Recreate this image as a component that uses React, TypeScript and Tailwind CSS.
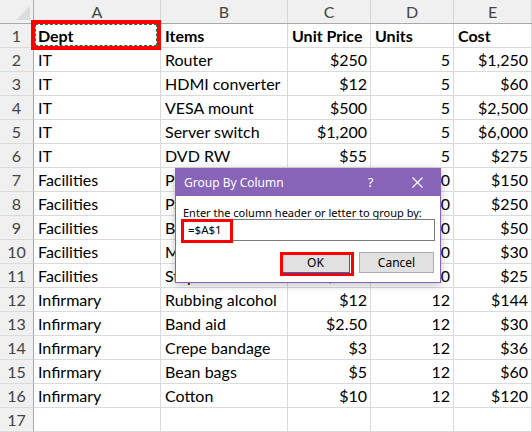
import React from "react";

const cols = [
  { w: "w-[127px]", label: "A" },
  { w: "w-[127px]", label: "B" },
  { w: "w-[83px]", label: "C" },
  { w: "w-[83px]", label: "D" },
  { w: "w-[78px]", label: "E" },
];

type Row = [string, string, string, string, string];

const rows: Row[] = [
  ["Dept", "Items", "Unit Price", "Units", "Cost"],
  ["IT", "Router", "$250", "5", "$1,250"],
  ["IT", "HDMI converter", "$12", "5", "$60"],
  ["IT", "VESA mount", "$500", "5", "$2,500"],
  ["IT", "Server switch", "$1,200", "5", "$6,000"],
  ["IT", "DVD RW", "$55", "5", "$275"],
  ["Facilities", "Printer", "$15", "10", "$150"],
  ["Facilities", "Paper", "$25", "10", "$250"],
  ["Facilities", "Broom", "$5", "10", "$50"],
  ["Facilities", "Mop", "$3", "10", "$30"],
  ["Facilities", "Stapler", "$2.50", "10", "$25"],
  ["Infirmary", "Rubbing alcohol", "$12", "12", "$144"],
  ["Infirmary", "Band aid", "$2.50", "12", "$30"],
  ["Infirmary", "Crepe bandage", "$3", "12", "$36"],
  ["Infirmary", "Bean bags", "$5", "12", "$60"],
  ["Infirmary", "Cotton", "$10", "12", "$120"],
  ["", "", "", "", ""],
];

export default function App() {
  return (
    <div className="relative w-[532px] h-[432px] overflow-hidden bg-white font-['Lato',sans-serif] text-[16px] text-black">
      {/* header row */}
      <div className="flex h-[24px] bg-[#f0f0f0] border-b border-[#a9a9a9]">
        <div className="relative w-[34px] h-full border-r border-[#a9a9a9]">
          <div className="absolute right-[3px] bottom-[3px] w-0 h-0 border-l-[14px] border-l-transparent border-b-[14px] border-b-[#dcdcdc]" />
        </div>
        {cols.map((c) => (
          <div
            key={c.label}
            className={`${c.w} h-full border-r border-[#d6d6d6] flex items-center justify-center text-[#444]`}
          >
            {c.label}
          </div>
        ))}
      </div>
      {rows.map((r, i) => (
        <div key={i} className="flex h-[24px]">
          <div className="w-[34px] h-full bg-[#f0f0f0] border-r border-b border-r-[#a9a9a9] border-b-[#dadada] flex items-center justify-center text-[#444]">
            {i + 1}
          </div>
          {r.map((v, j) => {
            const right = i > 0 && j >= 2;
            return (
              <div
                key={j}
                className={`${cols[j].w} h-full border-r border-b border-[#dadada] flex items-center whitespace-nowrap overflow-visible ${
                  right ? "justify-end pr-[3px]" : "pl-[4px]"
                } ${i === 0 ? "font-bold" : ""}`}
              >
                {v}
              </div>
            );
          })}
        </div>
      ))}

      {/* Dept selection: copy marquee + red highlight */}
      <div className="absolute left-[31px] top-[20px] w-[130px] h-[30px] border-[4px] border-[#ff0000]">
        <div className="w-full h-full border border-dashed border-[#217346]" />
      </div>

      {/* Dialog */}
      <div className="absolute left-[175px] top-[168px] w-[266px] h-[115px] bg-white border border-[#8764b8] font-['Noto_Sans',sans-serif] shadow-[0_2px_8px_rgba(0,0,0,0.25)]">
        <div className="h-[27px] bg-[#8764b8] flex items-center text-white text-[12px] pl-[8px]">
          <span className="flex-1">Group By Column</span>
          <span className="w-[47px] text-center text-[13px]">?</span>
          <span className="w-[46px] flex justify-center">
            <svg width="11" height="11" viewBox="0 0 11 11">
              <path d="M0.5 0.5 L10.5 10.5 M10.5 0.5 L0.5 10.5" stroke="white" strokeWidth="1.2" />
            </svg>
          </span>
        </div>
        <div className="px-[5px] pt-[10px]">
          <div className="text-[11px] leading-[13px] text-black whitespace-nowrap pl-[2px]">
            Enter the column header or letter to group by:
          </div>
          <div className="relative h-[22px] border border-[#7a7a7a] flex items-center pl-[6px] text-[11.5px]">
            =$A$1
            <div className="absolute left-[-1px] top-[-1px] w-[52px] h-[24px] border-[3px] border-[#ff0000]" />
          </div>
          <div className="flex justify-end gap-[9px] mt-[11px] pr-[1px]">
            <div className="relative w-[69px] h-[21px] bg-[#e1e1e1] border border-[#0078d7] flex items-center justify-center text-[12px]">
              OK
              <div className="absolute left-[-2px] top-[-1px] w-[74px] h-[24px] border-[3px] border-[#ff0000]" />
            </div>
            <div className="w-[75px] h-[21px] bg-[#e1e1e1] border border-[#adadad] flex items-center justify-center text-[12px]">
              Cancel
            </div>
          </div>
        </div>
      </div>
    </div>
  );
}
